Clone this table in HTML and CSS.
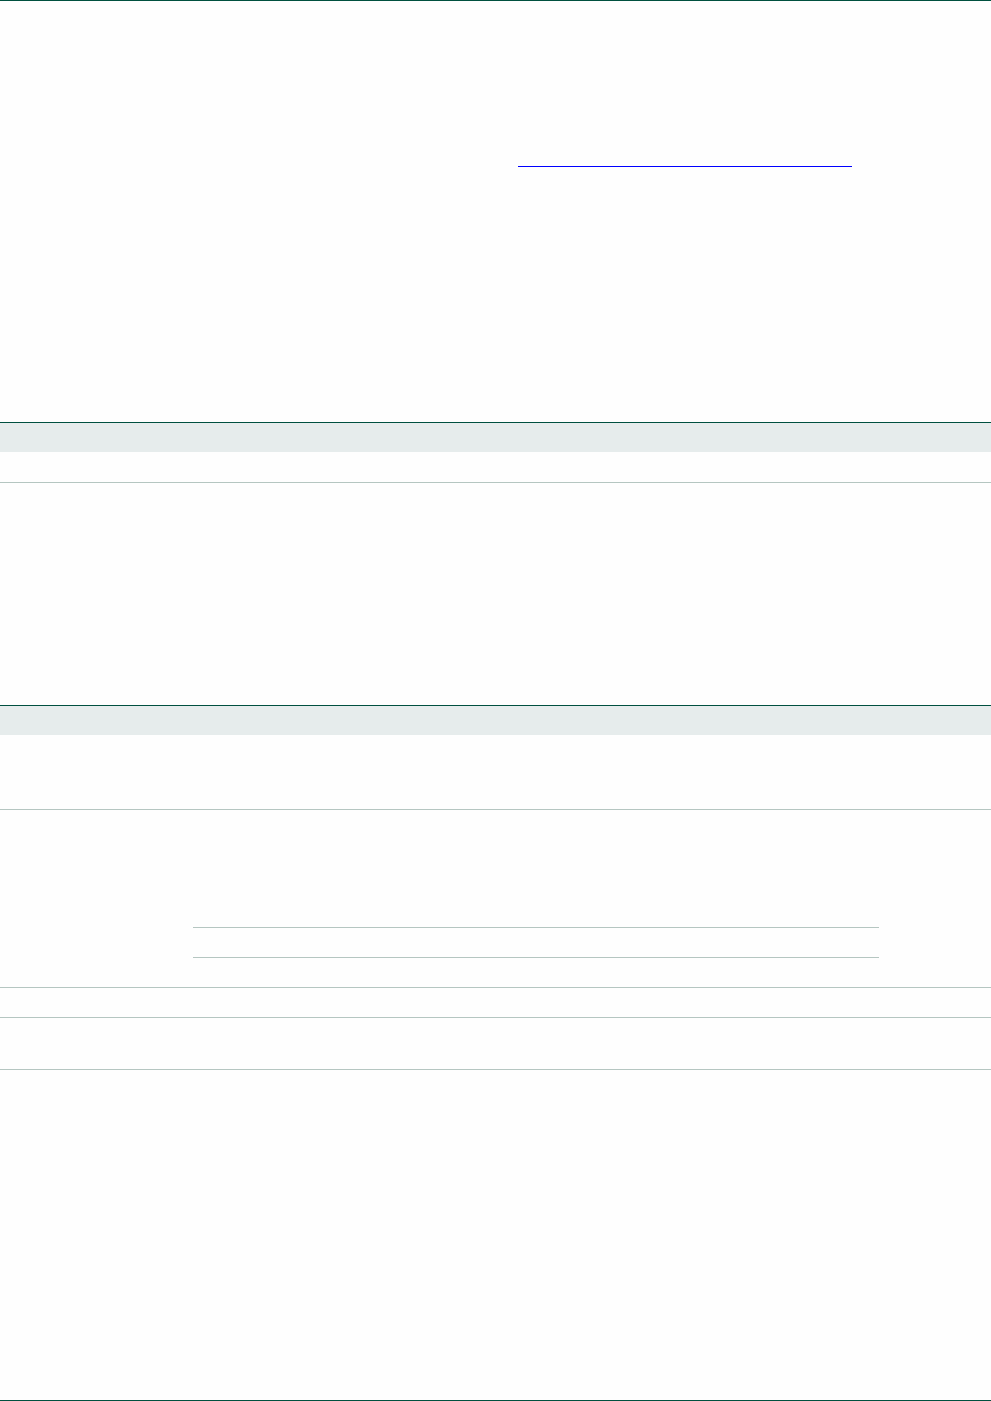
FILE: index.html
```html
<!DOCTYPE html>
<html lang="en">
<head>
  <meta charset="UTF-8" />
  <meta name="viewport" content="width=device-width, initial-scale=1.0"/>
  <title>Document</title>
  <link rel="stylesheet" href="styles.css">
</head>
<body>
  <div class="page">
    <div class="intro">
      <a class="link" href="#" aria-label="link"></a>
    </div>

    <div class="section first">
      <div class="band"></div>
      <div class="row r30"></div>
    </div>

    <div class="section second">
      <div class="band"></div>
      <div class="row r74"></div>
      <div class="row r177">
        <div class="inner">
          <div class="inner-row"></div>
        </div>
      </div>
      <div class="row r29"></div>
      <div class="row r51"></div>
    </div>

    <div class="tail"></div>
  </div>
</body>
</html>
```

FILE: styles.css
```css
body {
  margin: 0;
  background: #fefefe;
  font-family: 'Liberation Sans', Arial, sans-serif;
}
.page {
  border-top: 1px solid #00503f;
  border-bottom: 1px solid #00503f;
  height: 1399px;
}
.intro {
  height: 421px;
  overflow: hidden;
}
.link {
  display: block;
  margin: 165px 0 0 518px;
  width: 334px;
  height: 0;
  border-bottom: 1px solid #0000ff;
}
.section {
  border-top: 1px solid #00503f;
}
.band {
  height: 29px;
  background: #e6ecec;
}
.row {
  border-bottom: 1px solid #b5c6c1;
}
.r30 { height: 30px; }
.r74 { height: 74px; }
.r29 { height: 29px; }
.r51 { height: 51px; }
.r177 {
  height: 177px;
  padding-top: 117px;
}
.r177 .inner {
  margin-bottom: 29px;
}
.first {
  margin-bottom: 222px;
}
.inner {
  margin-left: 193px;
  width: 686px;
  border-top: 1px solid #b5c6c1;
}
.inner-row {
  height: 29px;
  border-bottom: 1px solid #b5c6c1;
}
.r177 {
  height: auto;
}
```
